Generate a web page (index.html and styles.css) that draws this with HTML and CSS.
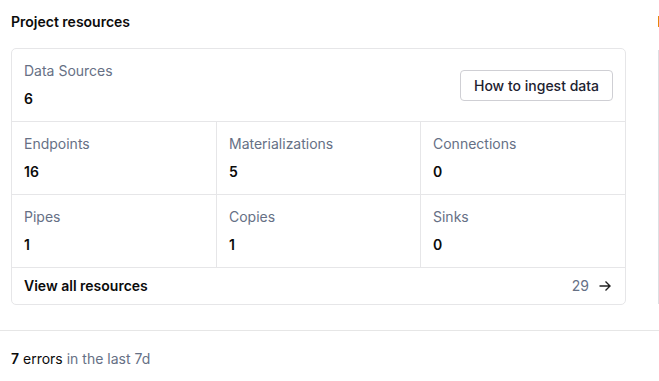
FILE: index.html
```html
<!DOCTYPE html>
<html lang="en">

<head>
    <meta charset="UTF-8">
    <meta name="viewport" content="width=device-width, initial-scale=1.0">
    <title>Overview</title>
    <link rel="stylesheet" href="styles.css">
</head>

<body>
    <div class="top">
        <div class="main">
            <h2 class="title">Project resources</h2>
            <div class="card">
                <div class="row first">
                    <div class="cell">
                        <div class="label">Data Sources</div>
                        <div class="value">6</div>
                    </div>
                    <button class="btn">How to ingest data</button>
                </div>
                <div class="grid">
                    <div class="cell">
                        <div class="label">Endpoints</div>
                        <div class="value">16</div>
                    </div>
                    <div class="cell">
                        <div class="label">Materializations</div>
                        <div class="value">5</div>
                    </div>
                    <div class="cell">
                        <div class="label">Connections</div>
                        <div class="value">0</div>
                    </div>
                    <div class="cell">
                        <div class="label">Pipes</div>
                        <div class="value">1</div>
                    </div>
                    <div class="cell">
                        <div class="label">Copies</div>
                        <div class="value">1</div>
                    </div>
                    <div class="cell">
                        <div class="label">Sinks</div>
                        <div class="value">0</div>
                    </div>
                </div>
                <div class="foot">
                    <span class="all">View all resources</span>
                    <span class="count">29
                        <svg class="arrow" width="14" height="14" viewBox="0 0 14 14">
                            <path d="M1.5 7h10.5M7.5 2.5L12 7l-4.5 4.5" fill="none" stroke="#222" stroke-width="1.4" />
                        </svg>
                    </span>
                </div>
            </div>
        </div>
        <div class="side">
            <div class="mark"></div>
            <div class="sidecard"></div>
        </div>
    </div>
    <div class="errors">
        <b>7</b> errors <span class="muted">in the last 7d</span>
    </div>
</body>

</html>
```

FILE: styles.css
```css
body {
    margin: 0;
    padding: 0;
    font-family: Inter, "Liberation Sans", sans-serif;
    font-size: 14px;
    line-height: 20px;
    color: #0b0b0b;
    background: #fff;
    overflow: hidden;
}

.top {
    display: grid;
    grid-template-columns: 637px 1fr;
    column-gap: 21px;
    border-bottom: 1px solid #e6e6e6;
    padding-bottom: 25px;
}

.main {
    padding: 12px 11px 0;
}

.title {
    margin: 0;
    font-size: 14px;
    font-weight: 600;
    line-height: 20px;
}

.card {
    margin-top: 16px;
    border: 1px solid #e6e6e8;
    border-radius: 5px;
}

.row.first {
    display: flex;
    justify-content: space-between;
    align-items: center;
    border-bottom: 1px solid #e6e6e8;
    padding-right: 12px;
}

.grid {
    display: grid;
    grid-template-columns: 205px 204px 1fr;
}

.grid .cell {
    border-bottom: 1px solid #e6e6e8;
    border-right: 1px solid #e6e6e8;
}

.grid .cell:nth-child(3n) {
    border-right: none;
}

.cell {
    padding: 12px 12px;
}

.label {
    color: #667085;
}

.value {
    margin-top: 8px;
    font-weight: 600;
}

.btn {
    font-family: inherit;
    font-size: 14px;
    font-weight: 500;
    color: #1d2230;
    background: #fff;
    border: 1px solid #cfcfd4;
    border-radius: 4px;
    height: 31px;
    width: 153px;
    padding: 0;
}

.foot {
    display: flex;
    justify-content: space-between;
    align-items: center;
    padding: 8px 13px 8px 12px;
}

.all {
    font-weight: 600;
}

.count {
    display: flex;
    align-items: center;
    gap: 9px;
    color: #667085;
}

.side {
    padding-top: 16px;
}

.mark {
    width: 2px;
    height: 11px;
    background: #e8860c;
}

.sidecard {
    margin-top: 23px;
    height: 254px;
    border-left: 1px solid #dedee2;
}

.errors {
    padding: 18px 11px;
}

.errors b {
    font-weight: 600;
}

.muted {
    color: #667085;
}
```
